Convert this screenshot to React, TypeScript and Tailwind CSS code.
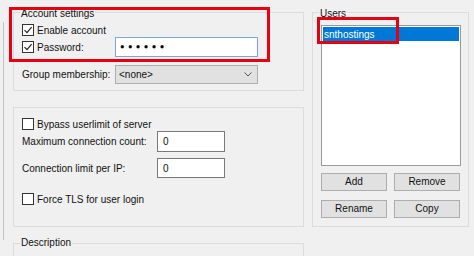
import React from 'react';

const CheckBox = ({checked, label}: {checked?: boolean; label: string}) => (
  <div className="flex items-center h-[16px] whitespace-nowrap">
    <span className="w-[12px] h-[12px] border border-[#333333] bg-white flex items-center justify-center shrink-0">
      {checked && (
        <svg width="10" height="10" viewBox="0 0 10 10">
          <path d="M1.5 5.2 L4 7.7 L8.6 2.2" fill="none" stroke="#222" strokeWidth="1.2" />
        </svg>
      )}
    </span>
    <span className="ml-[3px]">{label}</span>
  </div>
);

const Button = ({label}: {label: string}) => (
  <button className="w-[66px] h-[18px] bg-[#e1e1e1] border border-[#adadad] flex items-center justify-center leading-none">
    {label}
  </button>
);

const GroupLabel = ({text, className}: {text: string; className: string}) => (
  <div className={`${className} -ml-[2px] w-fit bg-[#f0f0f0] px-[1px] leading-[14px] h-[14px] whitespace-nowrap`}>
    {text}
  </div>
);

export default function App() {
  const font = {fontFamily: '"Liberation Sans", Arial, sans-serif'};
  return (
    <div
      className="relative w-[474px] h-[256px] bg-[#f0f0f0] overflow-hidden text-[10px] text-[#111111]"
      style={font}
    >
      <div className="flex items-start">
        <div className="ml-[3px] mt-[22px] h-[218px] w-px bg-[#c3c3c3]" />

        {/* left column */}
        <div className="ml-[9px] w-[291px] flex flex-col">
          <div className="mt-[12px] h-[79px] border border-[#dcdcdc] px-[8px]">
            <GroupLabel text="Account settings" className="-mt-[6px]" />
            <div className="mt-[1px]">
              <CheckBox checked label="Enable account" />
            </div>
            <div className="-mt-[1px] h-[20px] flex items-center">
              <div className="w-[93px]">
                <CheckBox checked label="Password:" />
              </div>
              <div className="w-[143px] h-[20px] bg-white border border-[#7aa7d6] flex items-center pl-[4px] text-[7.5px] tracking-[3.4px] text-black leading-none">
                ●●●●●●
              </div>
            </div>
            <div className="mt-[8px] h-[19px] flex items-center">
              <div className="w-[93px] whitespace-nowrap">Group membership:</div>
              <div className="w-[143px] h-[19px] bg-[#e1e1e1] border border-[#adadad] flex items-center justify-between pl-[3px] pr-[5px]">
                <span>&lt;none&gt;</span>
                <svg width="8" height="5" viewBox="0 0 8 5">
                  <path d="M0.5 0.5 L4 4 L7.5 0.5" fill="none" stroke="#555" strokeWidth="1" />
                </svg>
              </div>
            </div>
          </div>

          <div className="mt-[16px] h-[120px] border border-[#dcdcdc] px-[8px]">
            <div className="mt-[8px]">
              <CheckBox label="Bypass userlimit of server" />
            </div>
            <div className="-mt-[1px] h-[21px] flex items-center">
              <div className="w-[135px] whitespace-nowrap">Maximum connection count:</div>
              <div className="w-[68px] h-[21px] bg-white border border-[#7a7a7a] flex items-center pl-[5px]">0</div>
            </div>
            <div className="mt-[6px] h-[20px] flex items-center">
              <div className="w-[135px] whitespace-nowrap">Connection limit per IP:</div>
              <div className="w-[68px] h-[20px] bg-white border border-[#7a7a7a] flex items-center pl-[5px]">0</div>
            </div>
            <div className="mt-[13px]">
              <CheckBox label="Force TLS for user login" />
            </div>
          </div>

          <div className="mt-[16px] h-[40px] border border-[#dcdcdc] px-[8px]">
            <GroupLabel text="Description" className="-mt-[8px]" />
          </div>
        </div>

        {/* users */}
        <div className="ml-[8px] mt-[12px] w-[157px] h-[215px] border border-[#dcdcdc] px-[8px]">
          <GroupLabel text="Users" className="-mt-[6px]" />
          <div className="mt-[4px] w-[140px] h-[141px] bg-white border border-[#9a9a9a] p-px">
            <div className="h-[14px] bg-[#0078d7] text-white flex items-center pl-[1px]">snthostings</div>
          </div>
          <div className="mt-[7px] flex gap-[7px]">
            <Button label="Add" />
            <Button label="Remove" />
          </div>
          <div className="mt-[9px] flex gap-[7px]">
            <Button label="Rename" />
            <Button label="Copy" />
          </div>
        </div>
      </div>

      {/* annotation boxes */}
      <div className="absolute left-[9px] top-[7px] w-[261px] h-[55px] border-[3px] border-[#e60012]" />
      <div className="absolute left-[317px] top-[17px] w-[82px] h-[27px] border-[3px] border-[#e60012]" />
    </div>
  );
}
